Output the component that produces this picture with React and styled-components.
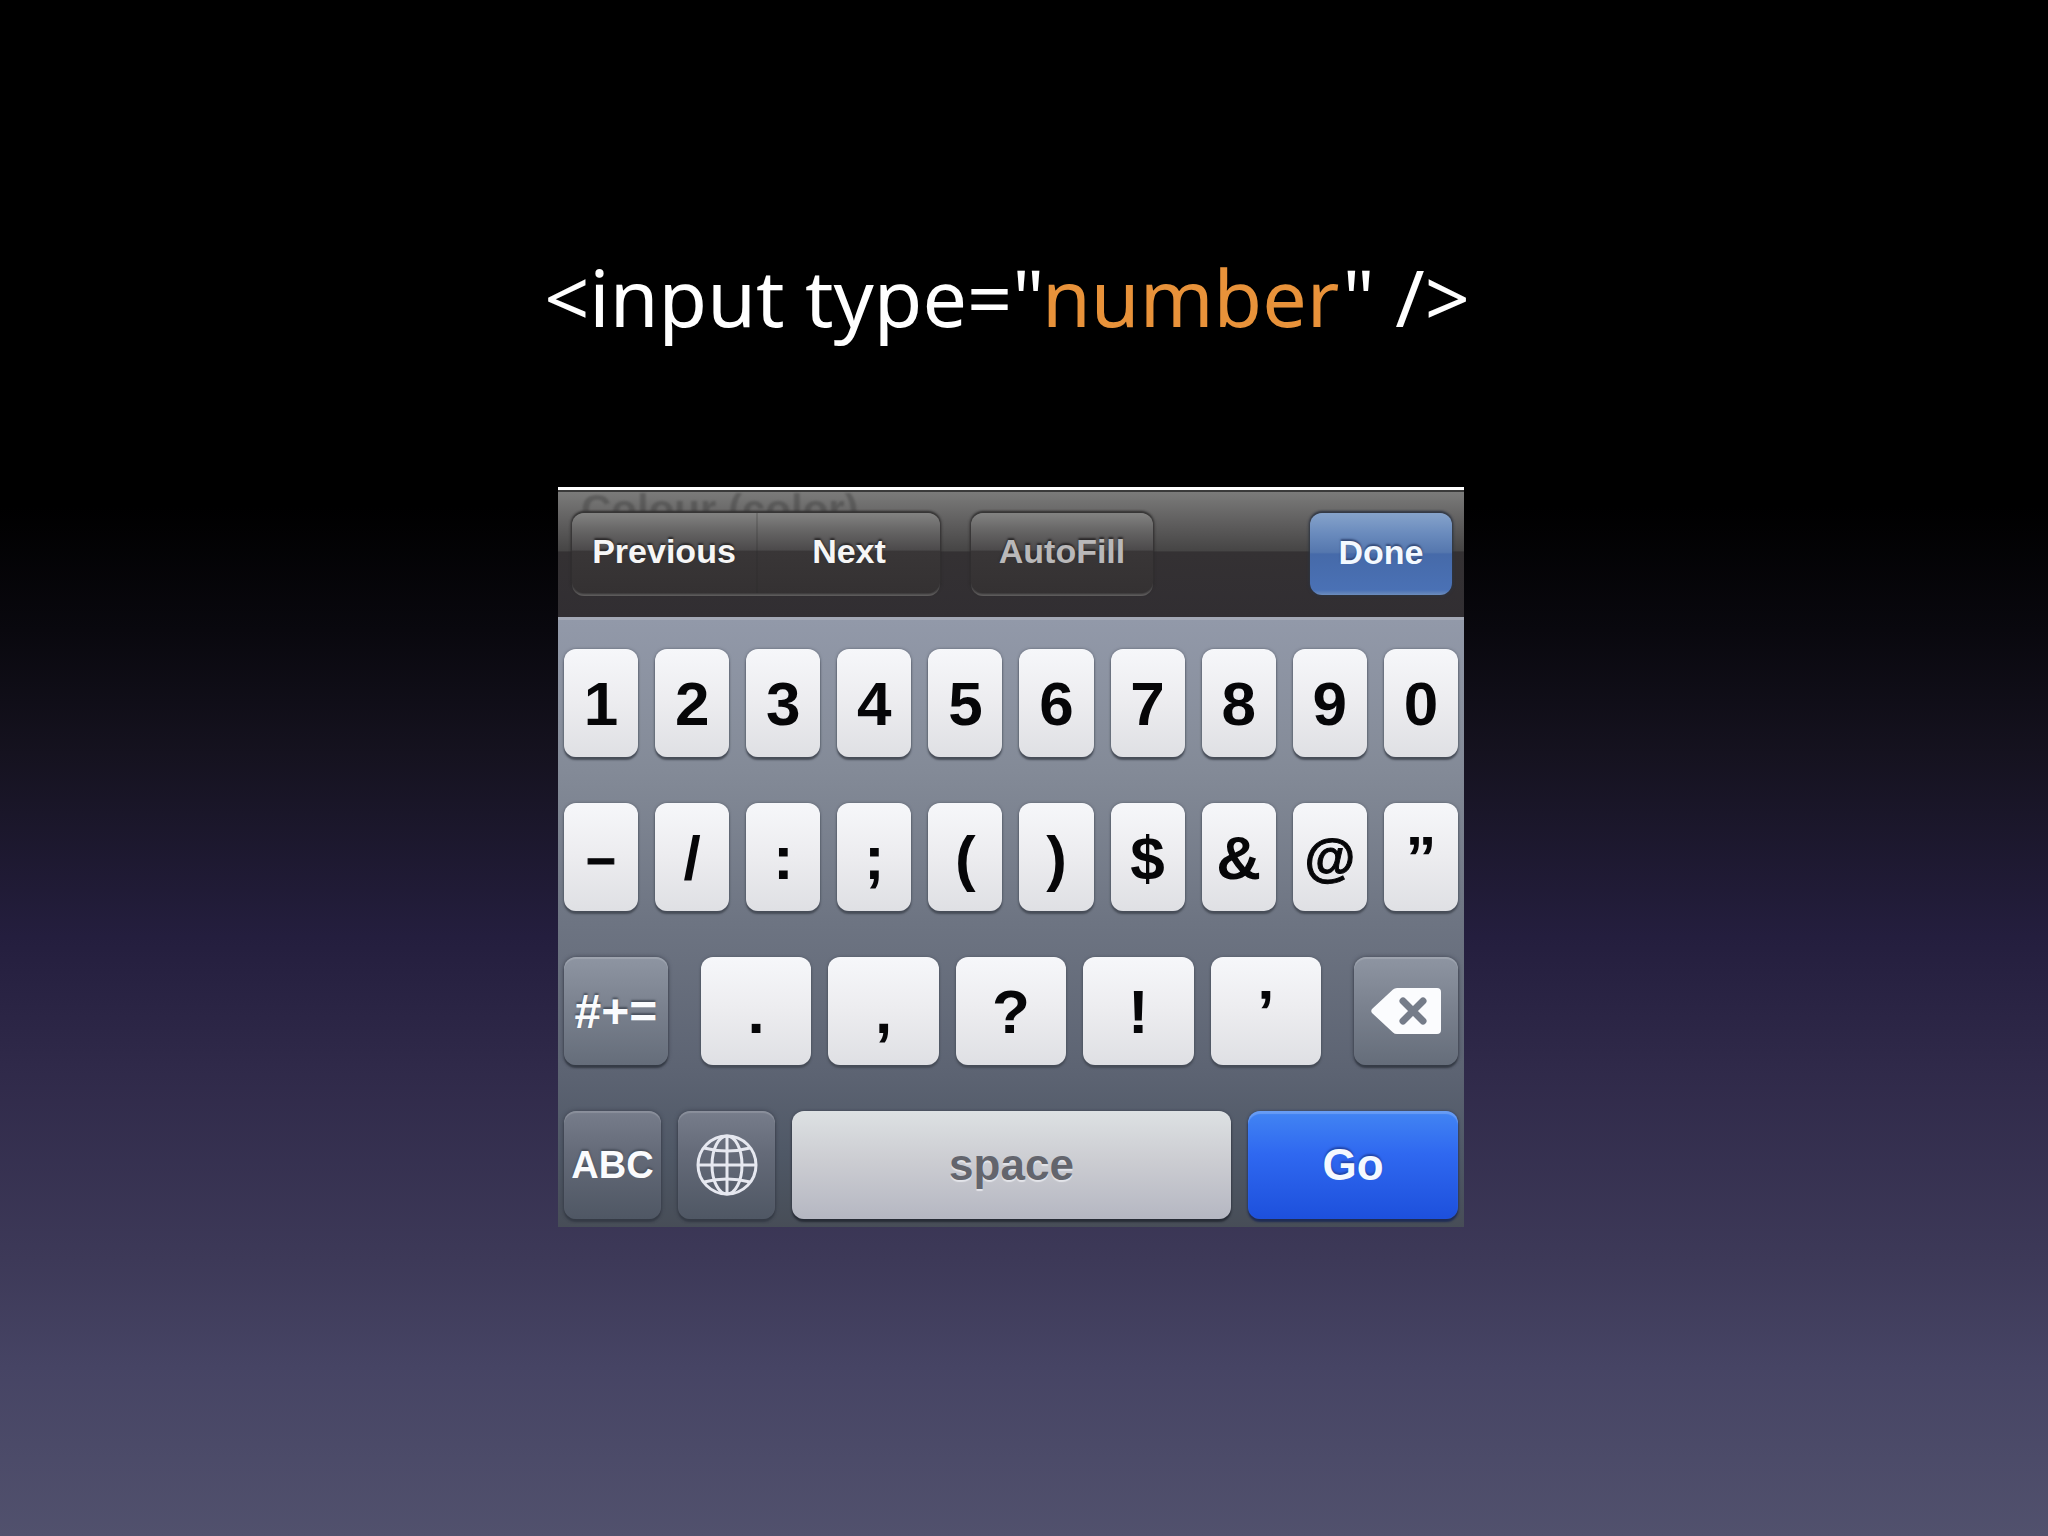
import React from "react";
import styled, { createGlobalStyle, css } from "styled-components";

const digits = ["1", "2", "3", "4", "5", "6", "7", "8", "9", "0"];
const symbols = ["–", "/", ":", ";", "(", ")", "$", "&", "@", "”"];
const punctuation = [".", ",", "?", "!", "’"];
const smallGlyphs = ["–", "@"];

function BackspaceIcon() {
  return (
    <svg width="70" height="46" viewBox="0 0 70 46" aria-hidden="true">
      <path
        d="M22 1.500 Q23.500 0 26 0 H66 Q70 0 70 4 V42 Q70 46 66 46 H26 Q23.500 46 22 44.500 L1 25 Q-0.500 23 1 21 Z"
        fill="#fbfcfe"
      />
      <path
        d="M32 13 L52 33 M52 13 L32 33"
        stroke="#757c89"
        strokeWidth="7"
        strokeLinecap="round"
      />
    </svg>
  );
}

function GlobeIcon() {
  return (
    <svg
      width="62"
      height="62"
      viewBox="0 0 62 62"
      fill="none"
      stroke="#e6e8f0"
      strokeWidth="3"
      aria-hidden="true"
    >
      <circle cx="31" cy="31" r="29" />
      <ellipse cx="31" cy="31" rx="15" ry="29" />
      <path d="M31 2 V60 M2 31 H60" />
      <path d="M8 14 Q31 20 54 14 M8 48 Q31 42 54 48" />
    </svg>
  );
}

export default function App() {
  return (
    <React.Fragment>
      <GlobalStyle />
      <Slide>
        <Title>
          &lt;input type="<Accent>number</Accent>" /&gt;
        </Title>
        <Keyboard aria-label="Keyboard">
          <Toolbar>
            <FieldLabel>Colour (color)</FieldLabel>
            <Segmented>
              <Segment type="button">Previous</Segment>
              <Segment type="button">Next</Segment>
            </Segmented>
            <ToolButton type="button">AutoFill</ToolButton>
            <DoneButton type="button">Done</DoneButton>
          </Toolbar>
          <Keys>
            <Row>
              {digits.map((key) => (
                <Key type="button" key={key}>
                  {key}
                </Key>
              ))}
            </Row>
            <Row>
              {symbols.map((key) => (
                <Key type="button" key={key} $small={smallGlyphs.includes(key)}>
                  {key}
                </Key>
              ))}
            </Row>
            <Row $wide>
              <ModeKey type="button" $span={104} $size={48}>
                #+=
              </ModeKey>
              <PunctuationKeys>
                {punctuation.map((key) => (
                  <Key type="button" key={key}>
                    {key}
                  </Key>
                ))}
              </PunctuationKeys>
              <ModeKey type="button" $span={104} aria-label="Delete">
                <BackspaceIcon />
              </ModeKey>
            </Row>
            <Row>
              <ModeKey type="button" $span={97} $size={38} $deep>
                ABC
              </ModeKey>
              <ModeKey type="button" $span={97} $deep aria-label="Next keyboard">
                <GlobeIcon />
              </ModeKey>
              <SpaceKey type="button">space</SpaceKey>
              <GoKey type="button">Go</GoKey>
            </Row>
          </Keys>
        </Keyboard>
      </Slide>
    </React.Fragment>
  );
}

const GlobalStyle = createGlobalStyle`
  * {
    box-sizing: border-box;
  }

  body {
    margin: 0;
    background: #000;
  }

  button {
    margin: 0;
    padding: 0;
    border: 0;
    font-family: "Liberation Sans", Arial, sans-serif;
    font-weight: bold;
    cursor: pointer;
  }
`;

const Slide = styled.main`
  min-height: 100vh;
  padding: 247px 26px 0 0;
  display: flex;
  flex-direction: column;
  align-items: center;
  background: linear-gradient(
    #000 0%,
    #000 33%,
    #09080e 41%,
    #15121f 49%,
    #241e3e 61%,
    #302a4a 70%,
    #3d3958 82%,
    #464464 89%,
    #51516d 100%
  );
`;

const Title = styled.h1`
  margin: 0 0 140px;
  padding-right: 8px;
  color: #fff;
  font-family: "Noto Sans", "Open Sans", sans-serif;
  font-size: 79px;
  font-weight: 400;
  line-height: 100px;
  white-space: nowrap;
`;

const Accent = styled.span`
  color: #e8923a;
`;

const Keyboard = styled.section`
  width: 100%;
  max-width: 906px;
  border-top: 3px solid #fff;
`;

const Toolbar = styled.div`
  position: relative;
  display: flex;
  align-items: flex-start;
  padding: 21px 12px 22px 14px;
  border-top: 2px solid #3a3a3a;
  background: linear-gradient(
    #7b7b7a 0%,
    #626161 22%,
    #464545 47%,
    #343133 48%,
    #312e32 100%
  );
`;

/* the form label that shows through the bar, above the buttons */
const FieldLabel = styled.span`
  position: absolute;
  top: 0;
  left: 23px;
  color: rgba(50, 50, 50, 0.35);
  font-family: "Liberation Sans", Arial, sans-serif;
  font-size: 42px;
  font-weight: bold;
  line-height: 36px;
  filter: blur(1px);
`;

const bezel = css`
  position: relative;
  border-radius: 12px;
  background: linear-gradient(
    #838382 0%,
    #666565 22%,
    #4c4a4b 46%,
    #393637 48%,
    #343132 100%
  );
  box-shadow:
    0 -2px 2px #373636,
    0 0 3px 1px #2d2b2c,
    0 3px 0 #656363;
`;

const toolText = css`
  padding-bottom: 3px;
  font-size: 34px;
`;

const Segmented = styled.div`
  display: flex;
  margin-right: 31px;
  ${bezel}
`;

const Segment = styled.button`
  width: 184px;
  height: 80px;
  color: #f6f6f6;
  background: none;
  text-shadow: 0 -2px 2px #2a2829;
  ${toolText}

  & + & {
    border-left: 2px solid rgba(40, 38, 39, 0.2);
  }
`;

const ToolButton = styled.button`
  width: 182px;
  height: 80px;
  color: #b9b8b9;
  text-shadow: 0 -2px 2px #2a2829;
  ${toolText}
  ${bezel}
`;

const DoneButton = styled.button`
  width: 142px;
  height: 82px;
  margin-left: auto;
  border-radius: 12px;
  color: #f3f9ff;
  text-shadow: 0 -2px 2px #344a78;
  background: linear-gradient(
    #86a3cb 0%,
    #6a8bbd 25%,
    #5577ae 48%,
    #466aa9 50%,
    #4a71b5 94%,
    #6d8dbd 100%
  );
  box-shadow:
    0 -2px 2px #343a46,
    0 0 3px 1px #2d3340;
  ${toolText}
`;

const Keys = styled.div`
  display: flex;
  flex-direction: column;
  gap: 46px;
  padding: 29px 6px 8px;
  border-top: 3px solid #a3a8b5;
  background: linear-gradient(
    #9299a9 0%,
    #838a97 25%,
    #6d7482 50%,
    #5c6372 75%,
    #4f5866 88%,
    #474d57 100%
  );
`;

const Row = styled.div`
  display: flex;
  gap: ${(props) => (props.$wide ? "33px" : "17px")};
`;

const PunctuationKeys = styled.div`
  flex: 1;
  display: flex;
  gap: 17px;
`;

const keycap = css`
  display: flex;
  align-items: center;
  justify-content: center;
  height: 108px;
  border-radius: 12px;
`;

const Key = styled.button`
  ${keycap}
  flex: 1 1 0;
  min-width: 0;
  color: #060608;
  font-size: ${(props) => (props.$small ? "52px" : "62px")};
  -webkit-text-stroke: ${(props) => (props.$small ? "1px #060608" : "0")};
  background: linear-gradient(#f6f7fa 0%, #ececef 50%, #dfe0e4 100%);
  box-shadow:
    0 3px 2px #474d58,
    0 0 3px rgba(60, 66, 78, 0.6);
`;

const ModeKey = styled.button`
  ${keycap}
  flex: 0 0 ${(props) => props.$span}px;
  color: #fafbfd;
  font-size: ${(props) => props.$size || 38}px;
  text-shadow: 0 -2px 2px #4a515d;
  background: ${(props) =>
    props.$deep
      ? "linear-gradient(#777d8b 0%, #646a78 40%, #4f5764 100%)"
      : "linear-gradient(#8e95a2 0%, #7b828f 45%, #656d7a 100%)"};
  box-shadow:
    inset 0 2px 1px rgba(255, 255, 255, 0.15),
    0 3px 2px #353b46,
    0 0 4px rgba(45, 50, 62, 0.7);
`;

const SpaceKey = styled.button`
  ${keycap}
  flex: 1;
  color: #63656d;
  font-size: 44px;
  text-shadow: 0 2px 1px #e4e5ea;
  background: linear-gradient(#dde1e3 0%, #cccdd2 45%, #b5b7c2 100%);
  box-shadow:
    0 3px 2px #272c36,
    0 0 3px rgba(45, 50, 62, 0.7);
`;

const GoKey = styled.button`
  ${keycap}
  flex: 0 0 210px;
  color: #f4f9ff;
  font-size: 44px;
  text-shadow: 0 -2px 2px #2145a8;
  background: linear-gradient(#4285f3 0%, #2f68f0 40%, #1d50dc 100%);
  box-shadow:
    inset 0 3px 1px rgba(255, 255, 255, 0.2),
    0 3px 2px #1f2c55,
    0 0 3px rgba(35, 50, 92, 0.8);
`;
